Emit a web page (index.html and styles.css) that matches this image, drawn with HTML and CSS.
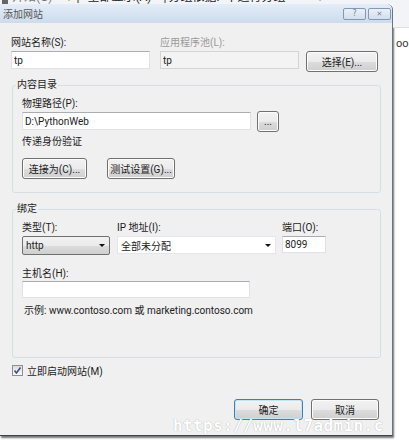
FILE: index.html
```html
<!DOCTYPE html>
<html lang="zh-CN">
<head>
  <meta charset="UTF-8" />
  <title>添加网站</title>
  <link rel="stylesheet" href="styles.css">
</head>
<body>

  <div class="toolbar">
    <span class="tb-icon"></span>
    <span class="tb-start">开始(G)</span>
    <span class="tb-drop">▾</span>
    <span class="tb-sep">|</span>
    <span class="tb-all">全部显示(A)</span>
    <span class="tb-sep2">|</span>
    <span class="tb-group">分组依据:</span>
    <span class="tb-none">不进行分组</span>
    <span class="tb-drop2">▾</span>
  </div>

  <div class="stage">
    <div class="dialog">
      <div class="titlebar">
        <span class="title">添加网站</span>
        <div class="caption">
          <span class="cap-btn">?</span>
          <span class="cap-btn cap-close">✕</span>
        </div>
      </div>

      <div class="dialog-body">
        <div class="row-site">
          <div class="col-name">
            <div class="label">网站名称(S):</div>
            <input class="textbox" type="text" value="tp">
          </div>
          <div class="col-pool">
            <div class="label muted">应用程序池(L):</div>
            <input class="textbox readonly" type="text" value="tp" readonly>
          </div>
          <button class="btn btn-select">选择(E)...</button>
        </div>

        <fieldset class="group group-content">
          <legend>内容目录</legend>
          <div class="label">物理路径(P):</div>
          <div class="path-row">
            <input class="textbox path" type="text" value="D:\PythonWeb">
            <button class="btn btn-browse">...</button>
          </div>
          <div class="label auth-label">传递身份验证</div>
          <div class="auth-row">
            <button class="btn btn-connect">连接为(C)...</button>
            <button class="btn btn-test">测试设置(G)...</button>
          </div>
        </fieldset>

        <fieldset class="group group-binding">
          <legend>绑定</legend>
          <div class="binding-row">
            <div class="col-type">
              <div class="label">类型(T):</div>
              <div class="combo combo-list">http<span class="arrow"></span></div>
            </div>
            <div class="col-ip">
              <div class="label">IP 地址(I):</div>
              <div class="combo combo-edit">全部未分配<span class="arrow"></span></div>
            </div>
            <div class="col-port">
              <div class="label">端口(O):</div>
              <input class="textbox port" type="text" value="8099">
            </div>
          </div>
          <div class="label host-label">主机名(H):</div>
          <input class="textbox host" type="text" value="">
          <div class="example">示例: www.contoso.com 或 marketing.contoso.com</div>
        </fieldset>

        <label class="check-row">
          <span class="checkbox">
            <svg width="9" height="9" viewBox="0 0 9 9"><path d="M1.5 4.5 L3.5 7 L7.5 1.5" fill="none" stroke="#3d4f86" stroke-width="1.6"/></svg>
          </span>
          立即启动网站(M)
        </label>

        <div class="actions">
          <button class="btn btn-ok">确定</button>
          <button class="btn btn-cancel">取消</button>
        </div>
      </div>
    </div>

    <div class="side">
      <div class="side-head"></div>
      <div class="side-text">oo</div>
    </div>
  </div>

  <div class="watermark">https://www.l7admin.c</div>

</body>
</html>
```

FILE: styles.css
```css
body {
  margin: 0;
  width: 409px;
  height: 440px;
  overflow: hidden;
  position: relative;
  background: #ffffff;
  font-family: Roboto, "Noto Sans CJK SC", sans-serif;
  font-size: 10px;
  color: #1c1c1c;
}

/* background window strip behind the dialog */
.toolbar {
  height: 4px;
  overflow: hidden;
  background: #f2f4f7;
  display: flex;
  align-items: flex-start;
  white-space: nowrap;
  font-size: 12px;
  line-height: 14px;
  color: #222;
}

.toolbar span {
  margin-top: -10px;
}

.tb-icon {
  width: 6px;
  height: 14px;
  margin-left: 2px;
  background: #666;
}
.tb-start { margin-left: 4px; color: #777; }
.tb-drop { margin-left: 14px; }
.tb-sep { margin-left: 4px; }
.tb-all { margin-left: 8px; }
.tb-sep2 { margin-left: 12px; }
.tb-group { margin-left: 2px; }
.tb-none { margin-left: 6px; }
.tb-drop2 { margin-left: 32px; }

.stage {
  display: flex;
  height: 436px;
}

.dialog {
  width: 393px;
  height: 432px;
  flex: none;
  box-sizing: border-box;
  display: flex;
  flex-direction: column;
  background: #f0f0f0;
  border-right: 1px solid #6a7380;
  border-bottom: 1px solid #3f444c;
  border-top-right-radius: 6px;
  box-shadow: 1px 2px 2px rgba(0, 0, 0, 0.55);
}

.titlebar {
  height: 19px;
  flex: none;
  display: flex;
  align-items: center;
  justify-content: space-between;
  padding-left: 3px;
  background: linear-gradient(#e4edf8, #cddbed);
  border-top-right-radius: 6px;
  color: #555;
  font-size: 10px;
}

.caption {
  display: flex;
  gap: 2px;
  margin-top: 4px;
  margin-right: 1px;
  align-self: flex-start;
}

.cap-btn {
  width: 23px;
  height: 12px;
  box-sizing: border-box;
  border: 1px solid #8497b3;
  border-radius: 2px;
  background: linear-gradient(#e9f0f8, #d3dfee);
  color: #7b8797;
  font-family: "DejaVu Sans", sans-serif;
  font-size: 8px;
  line-height: 10px;
  text-align: center;
}

.cap-close {
  font-size: 7px;
}

.dialog-body {
  padding: 13px 13px 0 11px;
}

.label {
  line-height: 14px;
  white-space: nowrap;
}

.muted {
  color: #9a9a9a;
}

.textbox {
  display: block;
  box-sizing: border-box;
  height: 18px;
  margin: 1px 0 0;
  padding: 0 2px;
  border: 1px solid #dfe3e8;
  border-top-color: #abadb3;
  background: #ffffff;
  font: inherit;
  color: #1c1c1c;
  outline: none;
}

.readonly {
  background: #f3f3f3;
  border-color: #d4d4d4;
}

.btn {
  box-sizing: border-box;
  height: 21px;
  padding: 0;
  border: 1px solid #707070;
  border-radius: 3px;
  background: linear-gradient(#f2f2f2 0%, #ebebeb 50%, #dddddd 51%, #cfcfcf 100%);
  box-shadow: inset 0 0 0 1px #fcfcfc;
  font: inherit;
  color: #1c1c1c;
  cursor: pointer;
}

/* first row: site name, pool, select */
.row-site {
  display: flex;
  align-items: flex-start;
}

.col-name {
  width: 141px;
}

.col-pool {
  width: 138px;
  margin-left: 8px;
}

.btn-select {
  width: 72px;
  margin-left: 8px;
  margin-top: 15px;
}

.group {
  margin: 0 0 0 1px;
  padding: 5px 9px 13px 9px;
  width: 369px;
  box-sizing: border-box;
  border: 1px solid #d5dfe5;
  border-radius: 3px;
}

.group legend {
  padding: 0 1px;
  margin-left: -6px;
  line-height: 14px;
}

.group-content {
  margin-top: 6px;
}

.path-row {
  display: flex;
  align-items: flex-start;
}

.path {
  width: 229px;
  margin-top: 1px;
}

.btn-browse {
  width: 22px;
  margin-left: 6px;
}

.auth-label {
  margin-top: 3px;
}

.auth-row {
  display: flex;
  margin-top: 9px;
}

.btn-connect {
  width: 65px;
}

.btn-test {
  width: 68px;
  margin-left: 20px;
}

.group-binding {
  margin-top: 9px;
  padding-bottom: 39px;
}

.binding-row {
  display: flex;
  align-items: flex-start;
}

.binding-row .label {
  margin-bottom: 1px;
}

.col-type {
  width: 88px;
}

.col-ip {
  width: 159px;
  margin-left: 7px;
}

.col-port {
  width: 44px;
  margin-left: 6px;
}

.combo {
  box-sizing: border-box;
  height: 18px;
  margin-top: 1px;
  padding: 0 3px;
  display: flex;
  align-items: center;
  justify-content: space-between;
  background: #ffffff;
  border: 1px solid #e3e6ea;
}

.combo-list {
  height: 19px;
  border: 1px solid #707070;
  border-radius: 2px;
  background: linear-gradient(#f2f2f2 0%, #ebebeb 50%, #dddddd 51%, #cfcfcf 100%);
}

.arrow {
  width: 0;
  height: 0;
  margin-right: 1px;
  border-left: 3px solid transparent;
  border-right: 3px solid transparent;
  border-top: 3px solid #111;
}

.port {
  width: 44px;
  margin-top: 1px;
  height: 17px;
}

.host-label {
  margin-top: 12px;
}

.host {
  width: 228px;
  height: 17px;
  margin-top: 0;
}

.example {
  margin-top: 6px;
  padding-left: 2px;
  line-height: 14px;
}

.check-row {
  display: flex;
  align-items: center;
  height: 14px;
  margin-top: 5px;
  margin-left: 1px;
  gap: 4px;
}

.checkbox {
  width: 11px;
  height: 11px;
  box-sizing: border-box;
  border: 1px solid #8e8f8f;
  background: linear-gradient(#dcdcdc, #fbfbfb);
  display: flex;
  align-items: center;
  justify-content: center;
}

.actions {
  display: flex;
  justify-content: flex-end;
  gap: 8px;
  margin-top: 22px;
}

.btn-ok {
  width: 69px;
  border-color: #3c7fb1;
  box-shadow: inset 0 0 0 1px #c4e5f6;
}

.btn-cancel {
  width: 68px;
}

/* right edge of the window behind */
.side {
  flex: 1;
  border-right: 2px solid #c9c9c9;
  margin-right: 3px;
}

.side-head {
  height: 23px;
  background: #f2f4f7;
  border-bottom: 1px solid #e0e0e0;
}

.side-text {
  margin-top: 9px;
  padding-left: 3px;
  font-size: 11px;
  line-height: 14px;
  color: #333;
}

.watermark {
  position: absolute;
  left: 173px;
  top: 416px;
  font-family: "DejaVu Sans Mono", monospace;
  font-weight: bold;
  font-size: 16px;
  letter-spacing: 0.4px;
  line-height: 20px;
  color: #ffffff;
  text-shadow: 0 0 1px #9a9a9a;
  white-space: nowrap;
}
```
